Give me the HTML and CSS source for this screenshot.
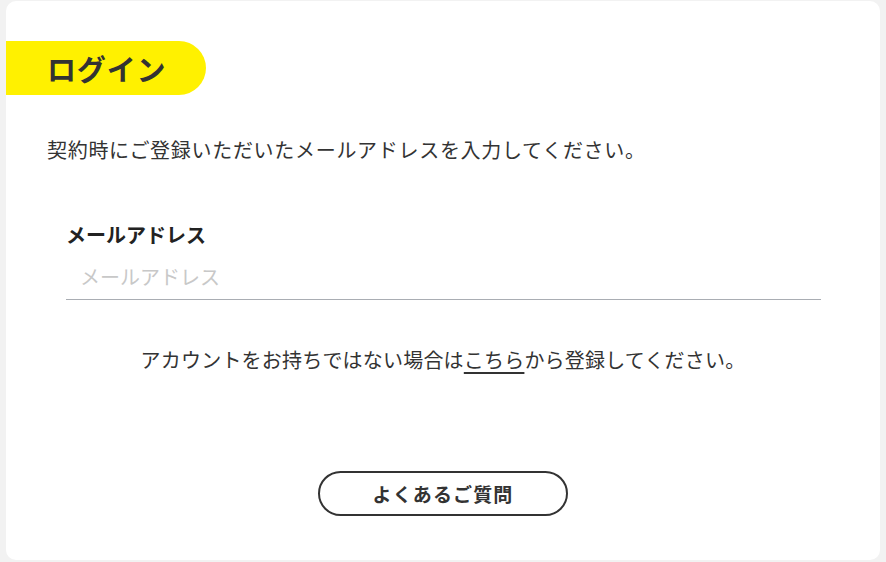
FILE: index.html
```html
<!DOCTYPE html>
<html lang="ja">
<head>
  <meta charset="utf-8">
  <title>ログイン</title>
  <link rel="stylesheet" href="styles.css">
</head>
<body>
  <div class="card">
    <h1 class="tab">ログイン</h1>
    <p class="lead">契約時にご登録いただいたメールアドレスを入力してください。</p>

    <div class="field">
      <label for="email">メールアドレス</label>
      <input id="email" type="email" placeholder="メールアドレス">
    </div>

    <p class="note">アカウントをお持ちではない場合は<a href="#">こちら</a>から登録してください。</p>

    <div class="actions">
      <button class="faq">よくあるご質問</button>
    </div>
  </div>
</body>
</html>
```

FILE: styles.css
```css
html, body {
  margin: 0;
  height: 100%;
}
body {
  background-color: #f2f2f2;
  font-family: "Noto Sans CJK JP", "Noto Sans", sans-serif;
  color: #333;
  padding: 1px 6px 2px 6px;
  box-sizing: border-box;
}
.card {
  background-color: #fff;
  border-radius: 10px;
  height: 100%;
  box-sizing: border-box;
  padding-top: 40px;
}
.tab {
  margin: 0;
  width: 200px;
  height: 54px;
  box-sizing: border-box;
  padding-left: 41px;
  background-color: #fff100;
  border-radius: 0 27px 27px 0;
  font-size: 29px;
  font-weight: bold;
  line-height: 54px;
  letter-spacing: 0.03em;
  color: #333;
}
.lead {
  margin: 42px 0 0 41px;
  font-size: 20px;
  line-height: 26px;
  letter-spacing: 0.035em;
}
.field {
  margin: 59px 59px 0 60px;
}
.field label {
  display: block;
  font-size: 20px;
  font-weight: bold;
  line-height: 26px;
  color: #222;
}
.field input {
  display: block;
  width: 100%;
  box-sizing: border-box;
  margin-top: 16px;
  padding: 0 14px 9px 14px;
  border: none;
  border-bottom: 1px solid #a9adb3;
  outline: none;
  font-family: inherit;
  font-size: 20px;
  line-height: 26px;
  color: #333;
}
.field input::placeholder {
  color: #c8c8c8;
}
.note {
  margin: 47px 0 0 0;
  text-align: center;
  font-size: 20px;
  line-height: 26px;
  letter-spacing: 0.01em;
}
.note a {
  color: #333;
  text-decoration: underline;
  text-underline-offset: 4px;
}
.actions {
  margin-top: 98px;
  text-align: center;
}
.faq {
  width: 250px;
  height: 45px;
  background-color: #fff;
  border: 2px solid #333;
  border-radius: 23px;
  font-family: inherit;
  font-size: 19px;
  font-weight: bold;
  letter-spacing: 0.06em;
  color: #333;
  cursor: pointer;
}
```
